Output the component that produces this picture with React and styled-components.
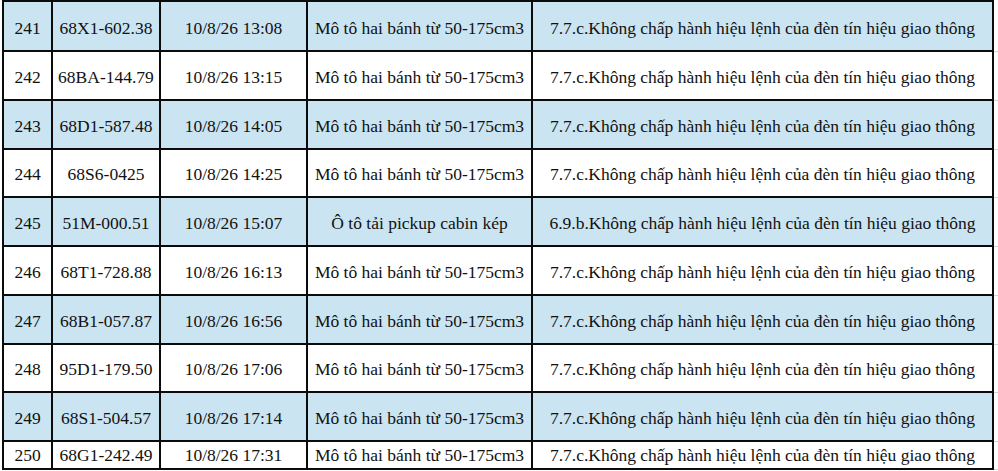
import React from "react";
import styled, { createGlobalStyle } from "styled-components";

const Global = createGlobalStyle`
  html, body { margin: 0; padding: 0; background: #ffffff; }
  body { font-family: "Liberation Serif", "Times New Roman", serif; }
`;

const Page = styled.div`
  width: 998px;
  height: 471px;
  overflow: hidden;
  padding-left: 2px;
  box-sizing: border-box;
`;

const Table = styled.table`
  border-collapse: separate;
  border-spacing: 0;
  table-layout: fixed;
  width: 996px;
`;

const Row = styled.tr`
  background: ${(p) => (p.$shaded ? "#cbe4f2" : "#ffffff")};
`;

const Cell = styled.td`
  box-sizing: border-box;
  width: ${(p) => p.$w}px;
  height: ${(p) => p.$h}px;
  padding: 0;
  border-right: 2px solid #0b0b0b;
  border-bottom: 2px solid #0b0b0b;
  border-top: ${(p) => (p.$first ? "2px solid #0b0b0b" : "none")};
  border-left: ${(p) => (p.$lead ? "2px solid #0b0b0b" : "none")};
  text-align: center;
  vertical-align: middle;
  font-family: "Liberation Serif", "Times New Roman", serif;
  font-size: 17.5px;
  line-height: 19px;
  color: #111111;
  white-space: nowrap;
  padding-top: ${(p) => (p.$short ? 0 : 4)}px;
`;

const Grid = styled.td`
  box-sizing: border-box;
  width: 4px;
  padding: 0;
  background: #ffffff;
  border-bottom: 1px solid #d4d4d4;
`;

const widths = [51, 108, 147, 225, 461];

const rows = [
  ["241", "68X1-602.38", "10/8/26 13:08", "Mô tô hai bánh từ 50-175cm3", "7.7.c.Không chấp hành hiệu lệnh của đèn tín hiệu giao thông"],
  ["242", "68BA-144.79", "10/8/26 13:15", "Mô tô hai bánh từ 50-175cm3", "7.7.c.Không chấp hành hiệu lệnh của đèn tín hiệu giao thông"],
  ["243", "68D1-587.48", "10/8/26 14:05", "Mô tô hai bánh từ 50-175cm3", "7.7.c.Không chấp hành hiệu lệnh của đèn tín hiệu giao thông"],
  ["244", "68S6-0425", "10/8/26 14:25", "Mô tô hai bánh từ 50-175cm3", "7.7.c.Không chấp hành hiệu lệnh của đèn tín hiệu giao thông"],
  ["245", "51M-000.51", "10/8/26 15:07", "Ô tô tải pickup cabin kép", "6.9.b.Không chấp hành hiệu lệnh của đèn tín hiệu giao thông"],
  ["246", "68T1-728.88", "10/8/26 16:13", "Mô tô hai bánh từ 50-175cm3", "7.7.c.Không chấp hành hiệu lệnh của đèn tín hiệu giao thông"],
  ["247", "68B1-057.87", "10/8/26 16:56", "Mô tô hai bánh từ 50-175cm3", "7.7.c.Không chấp hành hiệu lệnh của đèn tín hiệu giao thông"],
  ["248", "95D1-179.50", "10/8/26 17:06", "Mô tô hai bánh từ 50-175cm3", "7.7.c.Không chấp hành hiệu lệnh của đèn tín hiệu giao thông"],
  ["249", "68S1-504.57", "10/8/26 17:14", "Mô tô hai bánh từ 50-175cm3", "7.7.c.Không chấp hành hiệu lệnh của đèn tín hiệu giao thông"],
  ["250", "68G1-242.49", "10/8/26 17:31", "Mô tô hai bánh từ 50-175cm3", "7.7.c.Không chấp hành hiệu lệnh của đèn tín hiệu giao thông"],
];

export default function App() {
  return (
    <>
      <Global />
      <Page>
        <Table>
          <tbody>
            {rows.map((r, i) => {
              const first = i === 0;
              const last = i === rows.length - 1;
              const h = first ? 52 : last ? 28 : 48.75;
              return (
                <Row key={r[0]} $shaded={i % 2 === 0}>
                  {r.map((t, j) => (
                    <Cell
                      key={j}
                      $w={widths[j]}
                      $h={h}
                      $first={first}
                      $lead={j === 0}
                      $short={last}
                    >
                      {t}
                    </Cell>
                  ))}
                  <Grid />
                </Row>
              );
            })}
          </tbody>
        </Table>
      </Page>
    </>
  );
}
